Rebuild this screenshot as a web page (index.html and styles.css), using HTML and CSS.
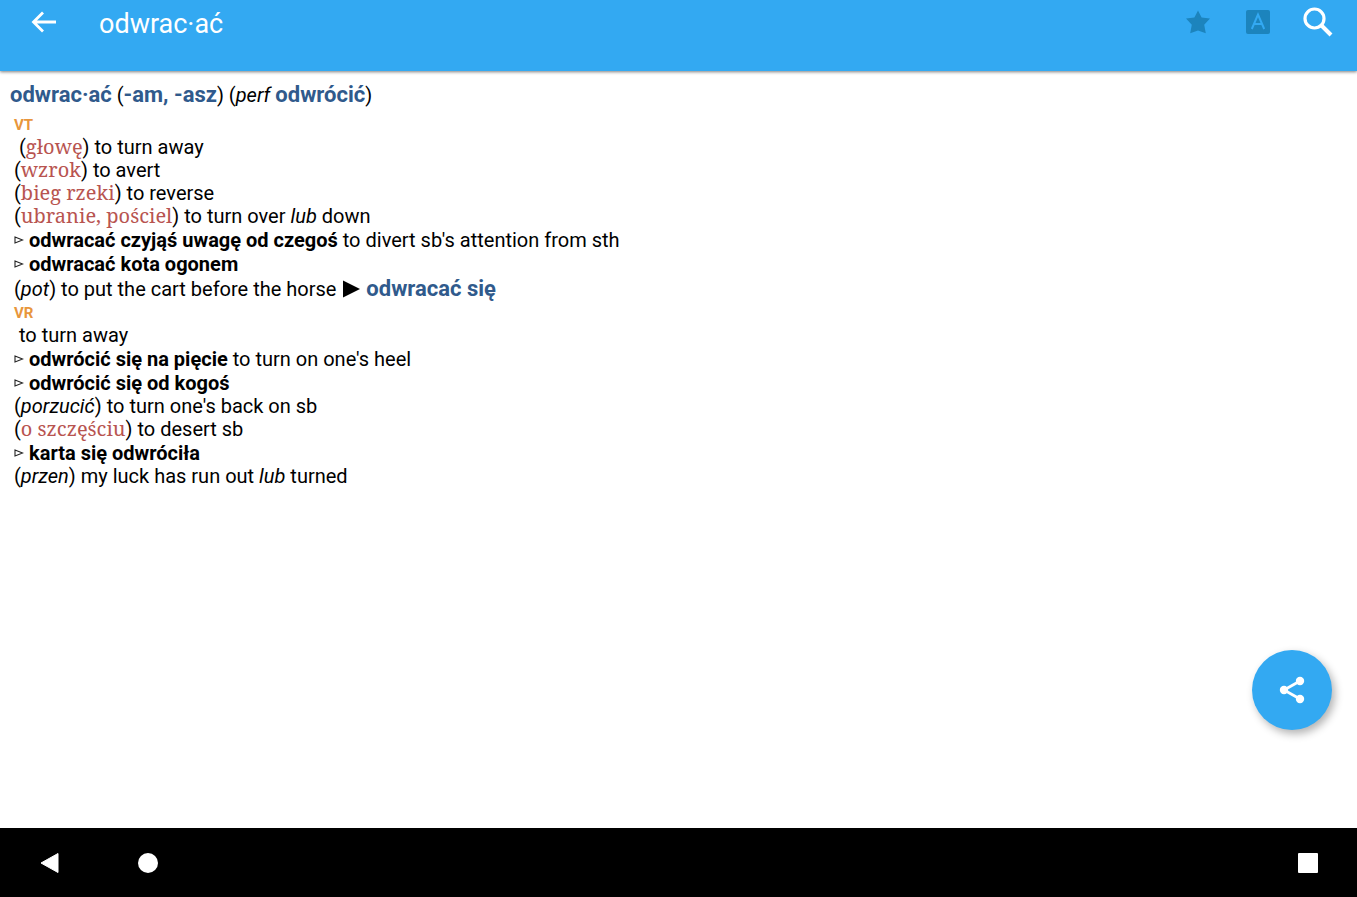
FILE: index.html
```html
<!DOCTYPE html>
<html lang="pl">
<head>
    <meta charset="UTF-8">
    <meta name="viewport" content="width=device-width, initial-scale=1.0">
    <title>odwrac·ać</title>
    <link rel="stylesheet" href="styles.css">
</head>
<body>
    <svg class="defs" width="0" height="0" aria-hidden="true">
        <symbol id="bullet" viewBox="0 0 10 10">
            <path d="M1 2 L8.6 5 L1 8 Z" fill="none" stroke="#222" stroke-width="1.1"/>
        </symbol>
    </svg>

    <header class="toolbar">
        <button class="icon-button" aria-label="Back">
            <svg width="26" height="22" viewBox="0 0 26 22"><path d="M25 11 H3 M12 1.5 L2.5 11 L12 20.5" fill="none" stroke="#fff" stroke-width="2.8"/></svg>
        </button>
        <h1>odwrac·ać</h1>
        <button class="icon-button" aria-label="Favourite">
            <svg width="26" height="24" viewBox="0 0 26 24"><path d="M13 0.5 L16.6 7.6 L25 8.6 L19.2 14.7 L20.8 23.2 L13 20.4 L5.2 23.2 L6.8 14.7 L1 8.6 L9.4 7.6 Z" fill="#1c84bd"/></svg>
        </button>
        <button class="icon-button" aria-label="Text size">
            <svg width="24" height="24" viewBox="0 0 24 24"><rect width="24" height="24" rx="2" fill="#1c84bd"/><path d="M5.8 19 L12 4.5 L18.2 19 M8 14 H16" fill="none" stroke="#33a9f2" stroke-width="2"/></svg>
        </button>
        <button class="icon-button" aria-label="Search">
            <svg width="30" height="30" viewBox="0 0 30 30"><circle cx="11.5" cy="11.5" r="9.5" fill="none" stroke="#fff" stroke-width="3.2"/><path d="M18.5 18.5 L28 28" stroke="#fff" stroke-width="4"/></svg>
        </button>
    </header>

    <main class="entry">
        <p class="headword"><b>odwrac·ać</b> (<b>-am, -asz</b>) (<i>perf</i> <b>odwrócić</b>)</p>

        <section>
            <h2>VT</h2>
            <p class="first">(<span class="hint">głowę</span>) to turn away</p>
            <p>(<span class="hint">wzrok</span>) to avert</p>
            <p>(<span class="hint">bieg rzeki</span>) to reverse</p>
            <p>(<span class="hint">ubranie, pościel</span>) to turn over <i>lub</i> down</p>
            <p class="phrase"><svg class="bullet"><use href="#bullet"/></svg><b>odwracać czyjąś uwagę od czegoś</b> to divert sb's attention from sth</p>
            <p class="phrase"><svg class="bullet"><use href="#bullet"/></svg><b>odwracać kota ogonem</b></p>
            <p class="with-link">(<i>pot</i>) to put the cart before the horse <svg class="arrow" viewBox="0 0 18 18"><path d="M0 0 L18 9 L0 18 Z"/></svg> <a href="#reflexive">odwracać się</a></p>
        </section>

        <section id="reflexive">
            <h2>VR</h2>
            <p class="first">to turn away</p>
            <p class="phrase"><svg class="bullet"><use href="#bullet"/></svg><b>odwrócić się na pięcie</b> to turn on one's heel</p>
            <p class="phrase"><svg class="bullet"><use href="#bullet"/></svg><b>odwrócić się od kogoś</b></p>
            <p>(<i>porzucić</i>) to turn one's back on sb</p>
            <p>(<span class="hint">o szczęściu</span>) to desert sb</p>
            <p class="phrase"><svg class="bullet"><use href="#bullet"/></svg><b>karta się odwróciła</b></p>
            <p>(<i>przen</i>) my luck has run out <i>lub</i> turned</p>
        </section>
    </main>

    <button class="share" aria-label="Share">
        <svg width="26" height="28" viewBox="0 0 26 28"><path d="M21 5 L5 14 L21 23" fill="none" stroke="#fff" stroke-width="2.8"/><g fill="#fff"><circle cx="21" cy="5" r="4.2"/><circle cx="5" cy="14" r="4.2"/><circle cx="21" cy="23" r="4.2"/></g></svg>
    </button>

    <nav class="system-bar">
        <button aria-label="System back"><svg width="20" height="22" viewBox="0 0 20 22"><path d="M1 11 L18 1.5 V20.5 Z" fill="#fff" stroke="#fff" stroke-linejoin="round"/></svg></button>
        <button aria-label="Home"><svg width="20" height="20" viewBox="0 0 20 20"><circle cx="10" cy="10" r="10" fill="#fff"/></svg></button>
        <button class="recent" aria-label="Recent apps"><svg width="20" height="20" viewBox="0 0 20 20"><rect width="20" height="20" rx="1" fill="#fff"/></svg></button>
    </nav>
</body>
</html>
```
FILE: styles.css
```css
* {
    box-sizing: border-box;
}

body {
    margin: 0;
    min-height: 100vh;
    display: flex;
    flex-direction: column;
    background: #fff;
    color: #000;
    font-family: Roboto, sans-serif;
    font-size: 20px;
    line-height: 23px;
}

button {
    padding: 0;
    border: none;
    background: none;
    cursor: pointer;
}

button svg {
    display: block;
}

.defs {
    position: absolute;
}

.toolbar {
    display: flex;
    align-items: flex-start;
    height: 71px;
    padding: 0 9px 0 14px;
    background: #33a9f2;
    box-shadow: 0 1px 3px rgba(0, 0, 0, 0.5);
}

.toolbar h1 {
    flex: 1;
    margin: 0 0 0 25px;
    color: #fff;
    font-size: 27px;
    font-weight: 400;
    line-height: 48px;
}

.icon-button {
    display: flex;
    align-items: center;
    justify-content: center;
    width: 60px;
    height: 44px;
}

.entry {
    flex: 1;
    padding: 11px 14px;
}

.entry p {
    margin: 0;
}

.entry .headword {
    margin: 0 0 6px -4px;
    line-height: 26px;
}

.headword b,
.entry a {
    color: #305a8c;
    font-size: 22px;
    font-weight: 700;
    text-decoration: none;
}

h2 {
    margin: 0;
    color: #e8963c;
    font-size: 15px;
    font-weight: 700;
    line-height: 22px;
}

.entry .first {
    padding-left: 5px;
}

.entry .phrase {
    line-height: 24px;
}

.entry .with-link {
    line-height: 25px;
}

.hint {
    color: #b85450;
    font-family: "Noto Serif", "DejaVu Serif", serif;
    font-size: 20px;
    line-height: 20px;
}

.bullet {
    width: 10px;
    height: 10px;
    margin-right: 5px;
    vertical-align: 2px;
}

.arrow {
    width: 17px;
    height: 18px;
    margin: 0 1px 0 2px;
    vertical-align: -2px;
}

.share {
    position: fixed;
    right: 25px;
    bottom: 167px;
    display: flex;
    align-items: center;
    justify-content: center;
    width: 80px;
    height: 80px;
    border-radius: 50%;
    background: #33a9f2;
    box-shadow: 3px 4px 8px rgba(0, 0, 0, 0.3);
}

.system-bar {
    display: flex;
    align-items: center;
    gap: 78px;
    height: 69px;
    padding: 0 39px 0 40px;
    background: #000;
}

.system-bar .recent {
    margin-left: auto;
}
```
